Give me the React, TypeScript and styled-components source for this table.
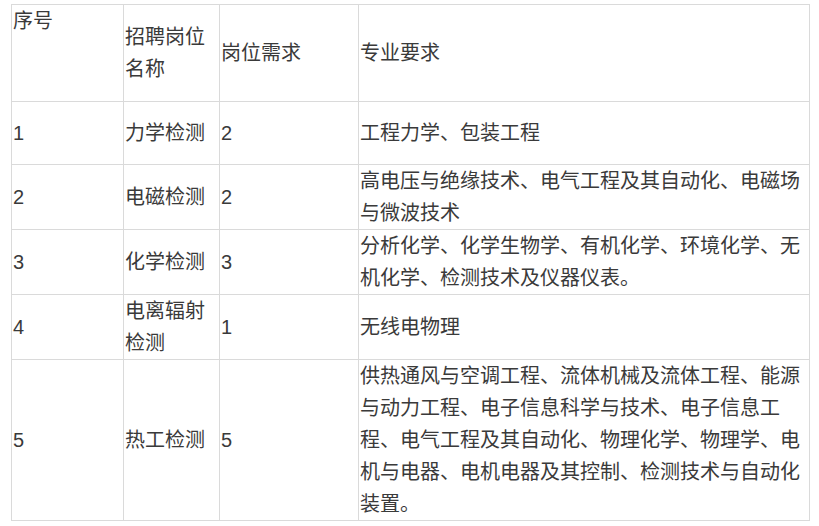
import React from "react";
import styled, { createGlobalStyle } from "styled-components";

const GlobalStyle = createGlobalStyle`
  html, body {
    margin: 0;
    padding: 0;
    background: #ffffff;
  }
  body {
    font-family: "Liberation Sans", "Noto Sans CJK SC", sans-serif;
    color: #3a3a3a;
  }
`;

const Page = styled.div`
  padding: 4px 0 0 11px;
`;

const Table = styled.table`
  border-collapse: collapse;
  table-layout: fixed;
  width: 798px;
  font-size: 20px;
  line-height: 32px;
  font-family: "Liberation Sans", "Noto Sans CJK SC", sans-serif;
  color: #3a3a3a;
`;

const Row = styled.tr<{ $h: number }>`
  height: ${(p) => p.$h}px;
`;

const Cell = styled.td<{ $top?: boolean }>`
  border: 1px solid #dadada;
  padding: 0 1px;
  vertical-align: ${(p) => (p.$top ? "top" : "middle")};
  text-align: left;
  word-break: normal;
  line-break: strict;
`;

const rows = [
  { h: 63, no: "1", name: "力学检测", num: "2", req: "工程力学、包装工程" },
  {
    h: 65,
    no: "2",
    name: "电磁检测",
    num: "2",
    req: "高电压与绝缘技术、电气工程及其自动化、电磁场与微波技术",
  },
  {
    h: 65,
    no: "3",
    name: "化学检测",
    num: "3",
    req: "分析化学、化学生物学、有机化学、环境化学、无机化学、检测技术及仪器仪表。",
  },
  { h: 65, no: "4", name: "电离辐射检测", num: "1", req: "无线电物理" },
  {
    h: 161,
    no: "5",
    name: "热工检测",
    num: "5",
    req: "供热通风与空调工程、流体机械及流体工程、能源与动力工程、电子信息科学与技术、电子信息工程、电气工程及其自动化、物理化学、物理学、电机与电器、电机电器及其控制、检测技术与自动化装置。",
  },
];

export default function App() {
  return (
    <>
      <GlobalStyle />
      <Page>
        <Table>
          <colgroup>
            <col style={{ width: 112 }} />
            <col style={{ width: 96 }} />
            <col style={{ width: 139 }} />
            <col style={{ width: 451 }} />
          </colgroup>
          <tbody>
            <Row $h={97}>
              <Cell $top>序号</Cell>
              <Cell>招聘岗位名称</Cell>
              <Cell>岗位需求</Cell>
              <Cell>专业要求</Cell>
            </Row>
            {rows.map((r) => (
              <Row key={r.no} $h={r.h}>
                <Cell>{r.no}</Cell>
                <Cell>{r.name}</Cell>
                <Cell>{r.num}</Cell>
                <Cell>{r.req}</Cell>
              </Row>
            ))}
          </tbody>
        </Table>
      </Page>
    </>
  );
}
